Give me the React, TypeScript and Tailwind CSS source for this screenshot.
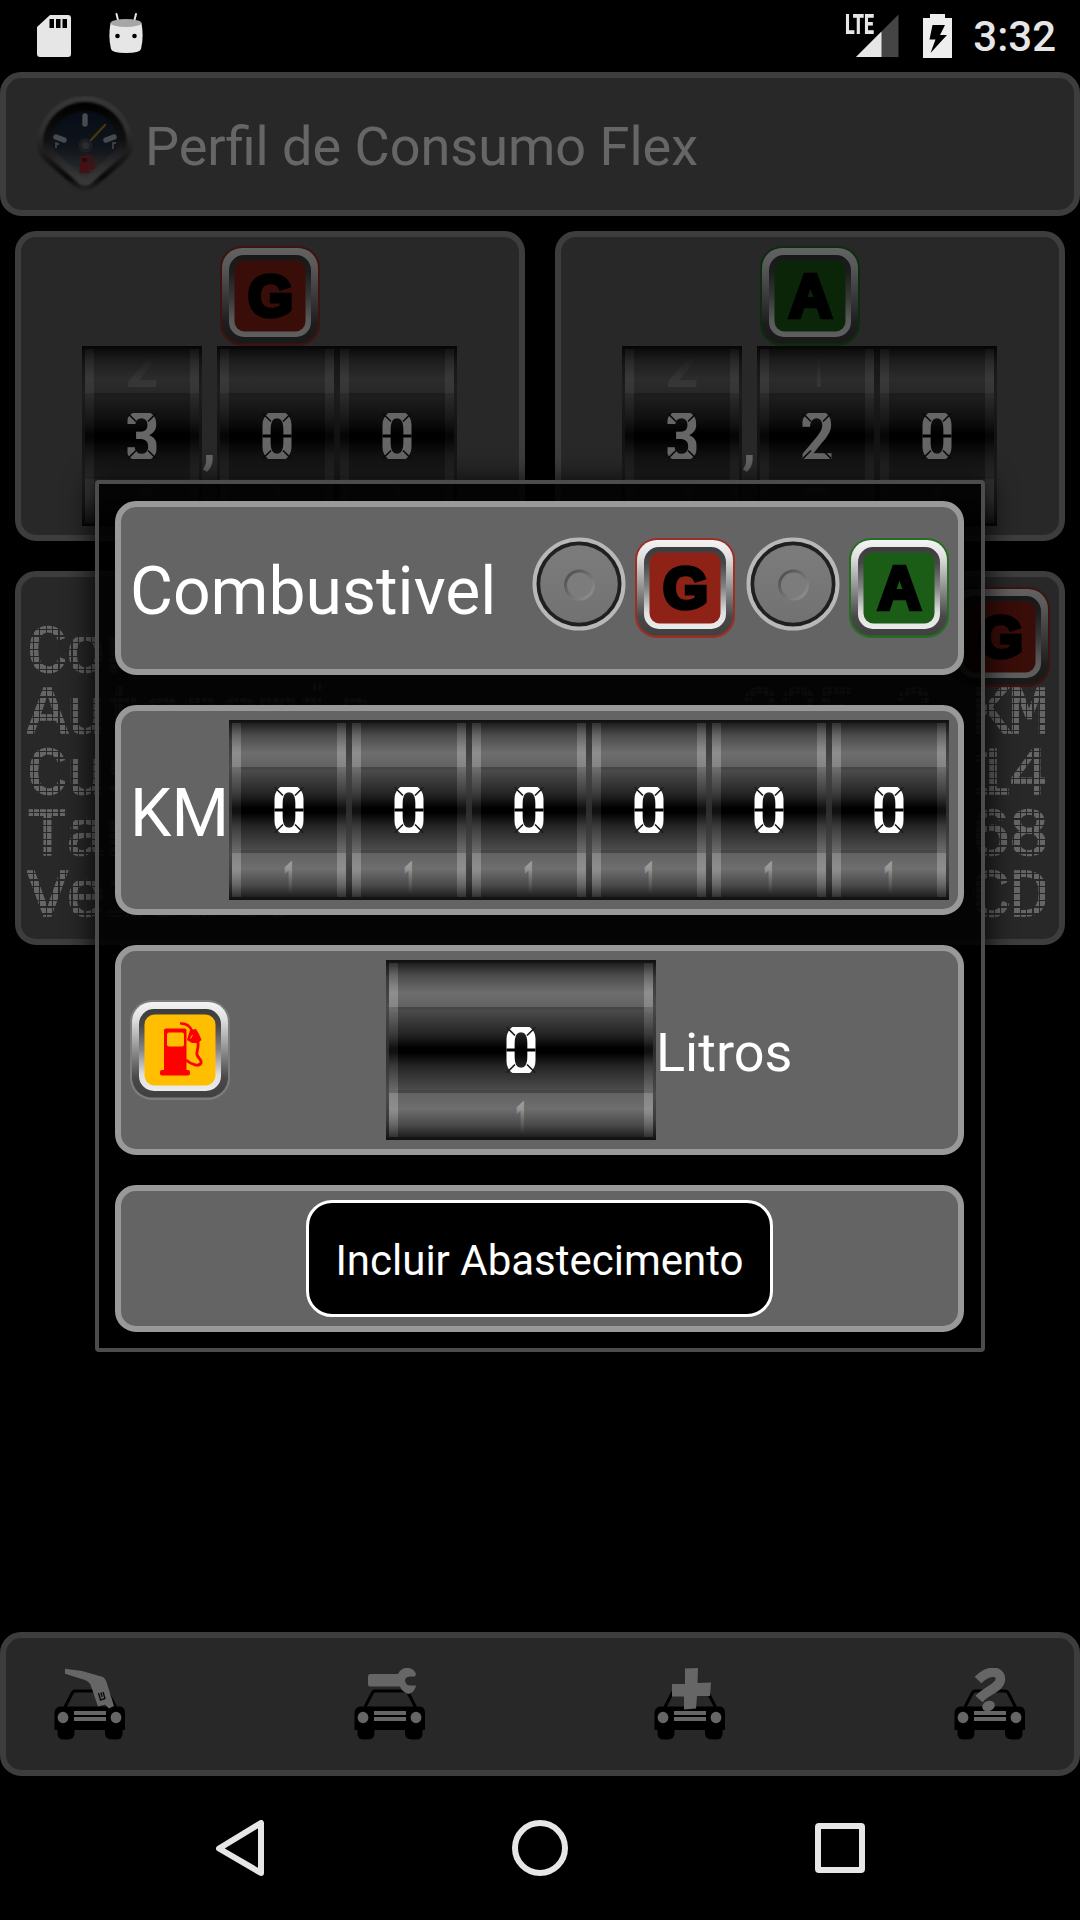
import React from 'react';

type Tone = 'red' | 'green' | 'amber';

const TONES: Record<Tone, { face: string; edge: string }> = {
  red: { face: '#8e2216', edge: '#9c2e24' },
  green: { face: '#1b5d16', edge: '#256e22' },
  amber: { face: '#ffbf00', edge: '#7c7c7c' },
};

function Badge({ tone, children }: { tone: Tone; children: React.ReactNode }) {
  const t = TONES[tone];
  const id = 'badge-' + tone;
  return (
    <svg viewBox="0 0 100 100" className="size-[100px] shrink-0">
      <defs>
        <linearGradient id={id + '-outer'} x1="0" y1="0" x2="0" y2="1">
          <stop offset="0" stopColor="#f4f4f4" />
          <stop offset="0.18" stopColor="#e0e0e0" />
          <stop offset="0.5" stopColor="#909090" />
          <stop offset="0.8" stopColor="#484848" />
          <stop offset="1" stopColor="#404040" />
        </linearGradient>
        <linearGradient id={id + '-inner'} x1="0" y1="0" x2="0" y2="1">
          <stop offset="0" stopColor="#3c3c3c" />
          <stop offset="0.2" stopColor="#484848" />
          <stop offset="0.5" stopColor="#858585" />
          <stop offset="0.8" stopColor="#e0e0e0" />
          <stop offset="1" stopColor="#ececec" />
        </linearGradient>
      </defs>
      <rect x="0" y="0" width="100" height="100" rx="22" fill={t.edge} />
      <g className="blur-[0.7px]">
        <rect x="2" y="2" width="96" height="95.5" rx="20" fill={`url(#${id}-outer)`} />
        <rect x="9" y="9" width="82" height="82" rx="15" fill={`url(#${id}-inner)`} />
        <rect x="14.5" y="14.5" width="71" height="71" rx="10" fill={t.face} />
      </g>
      {children}
    </svg>
  );
}

function FuelBadge({ letter }: { letter: 'G' | 'A' }) {
  return (
    <Badge tone={letter === 'G' ? 'red' : 'green'}>
      <text
        x="50.5"
        y={letter === 'G' ? 69.5 : 71}
        textAnchor="middle"
        fontSize={letter === 'G' ? 58 : 61}
        textLength={letter === 'G' ? 45 : 43}
        lengthAdjust="spacingAndGlyphs"
        className="font-['Liberation_Sans',sans-serif] font-bold"
        fill="#000"
        stroke="#000"
        strokeWidth="4.5"
      >
        {letter}
      </text>
    </Badge>
  );
}

function PumpBadge() {
  return (
    <Badge tone="amber">
      <rect x="34" y="28.5" width="22.5" height="43" rx="2" fill="#f00" />
      <rect x="30" y="70" width="30" height="5.5" rx="2" fill="#f00" />
      <rect x="37" y="32.5" width="17" height="14" rx="2" fill="#ffbf00" />
      <path d="M50 23.5 C56 23 60 26 62 31" fill="none" stroke="#f00" strokeWidth="2.6" />
      <path d="M60 30 L66 29 L69 34 L71.5 40 L68 43 L62 43 L57 40 Z" fill="#f00" />
      <path d="M60.5 38.5 L62.5 35" stroke="#ffbf00" strokeWidth="1" />
      <path
        d="M68 42 C69 48 66 52 67 55 C69 59 72 60 71 63 C69 67 62 65 56 60"
        fill="none"
        stroke="#f00"
        strokeWidth="2.8"
      />
    </Badge>
  );
}

function Wheel({ value, above, below, wide }: { value: string; above?: string; below?: string; wide?: boolean }) {
  return (
    <div
      className={
        'relative h-[180px] shrink-0 bg-[linear-gradient(#101010,#3a3a3a_20px,#4a4a4a_46px,#2c2c2c_90px,#4a4a4a_134px,#3a3a3a_160px,#101010)] p-[3px] ' +
        (wide ? 'w-[270px]' : 'w-[120px]')
      }
    >
      <div className="flex h-full flex-col">
        <div className="h-[44px] bg-[linear-gradient(#1e1e1e,#4a4a4a_12px,#6e6e6e_30px,#626262_44px)]" />
        <div className="h-[3px] bg-[#464646]" />
        <div className="h-[80px] bg-[linear-gradient(#4c4c4c,#242424_24px,#000_38px,#000_43px,#242424_56px,#4c4c4c)]" />
        <div className="h-[3px] bg-[#464646]" />
        <div className="h-[44px] bg-[linear-gradient(#626262,#6e6e6e_16px,#4a4a4a_32px,#1e1e1e)]" />
      </div>
      <div className="absolute inset-y-[3px] left-[3px] w-[9px] bg-[linear-gradient(#ffffff15,#ffffff38_25px,#ffffff38_44px,#ffffff28_50px,#ffffff10_87px,#ffffff28_126px,#ffffff38_132px,#ffffff38_150px,#ffffff15)]" />
      <div className="absolute inset-y-[3px] right-[3px] w-[9px] bg-[linear-gradient(#ffffff15,#ffffff38_25px,#ffffff38_44px,#ffffff28_50px,#ffffff10_87px,#ffffff28_126px,#ffffff38_132px,#ffffff38_150px,#ffffff15)]" />
      <div className="absolute inset-0 flex justify-center">
        <svg viewBox="0 0 40 180" className="h-[180px] w-[40px] font-[Roboto,sans-serif]">
          <defs>
            <clipPath id="digit-window">
              <rect x="5.5" y="67" width="29" height="46" />
            </clipPath>
            <linearGradient id="fade-down" gradientUnits="userSpaceOnUse" x1="0" y1="138" x2="0" y2="174">
              <stop offset="0" stopColor="#fff" stopOpacity="0.42" />
              <stop offset="0.55" stopColor="#fff" stopOpacity="0.15" />
              <stop offset="1" stopColor="#fff" stopOpacity="0" />
            </linearGradient>
            <linearGradient id="fade-up" gradientUnits="userSpaceOnUse" x1="0" y1="12" x2="0" y2="42">
              <stop offset="0" stopColor="#fff" stopOpacity="0" />
              <stop offset="1" stopColor="#fff" stopOpacity="0.24" />
            </linearGradient>
          </defs>
          {above && (
            <text
              x={above === '1' ? 14 : 3.5}
              y="41"
              fontSize="62"
              textLength={above === '1' ? 14 : 33}
              lengthAdjust="spacingAndGlyphs"
              fill="url(#fade-up)"
              className="font-bold"
            >
              {above}
            </text>
          )}
          <g clipPath="url(#digit-window)">
            <text
              x={value === '0' ? 1.5 : 2}
              y="115"
              fontSize="70"
              textLength={value === '0' ? 37 : 36}
              lengthAdjust="spacingAndGlyphs"
              fill="#fff"
              className="font-bold"
            >
              {value}
            </text>
            <path d="M5.500 67 L14 75.500 M34.500 67 L26 75.500 M5.500 113 L14 104.500 M34.500 113 L26 104.500" stroke="#1c1c1c" strokeWidth="1.600" />
            {value === '0' && <path d="M4 90 H14 M26 90 H36" stroke="#000" strokeWidth="3" />}
          </g>
          {below && (
            <text
              x={below === '1' ? 14 : 3.5}
              y="183"
              fontSize="60"
              textLength={below === '1' ? 13 : 33}
              lengthAdjust="spacingAndGlyphs"
              fill="url(#fade-down)"
              className="font-bold"
            >
              {below}
            </text>
          )}
        </svg>
      </div>
    </div>
  );
}

function AverageCard({ fuel, digits }: { fuel: 'G' | 'A'; digits: { v: string; above?: string; below?: string }[] }) {
  return (
    <div className="flex h-[310px] w-[510px] flex-col items-center rounded-[21px] border-[6px] border-[#999] bg-[#646464] pt-[9px]">
      <FuelBadge letter={fuel} />
      <div className="ml-[61px] flex items-start self-start">
        <Wheel value={digits[0].v} above={digits[0].above} below={digits[0].below} />
        <span className="w-[15px] pt-[62px] text-[62px] leading-[66px] font-medium text-white">,</span>
        <Wheel value={digits[1].v} above={digits[1].above} below={digits[1].below} />
        <Wheel value={digits[2].v} below={digits[2].below} />
      </div>
    </div>
  );
}

function MatrixRow({ left, right }: { left: string; right?: string }) {
  return (
    <div className="flex h-[61px] items-start justify-between whitespace-pre">
      <span>{left}</span>
      <span>{right}</span>
    </div>
  );
}

function Gauge() {
  return (
    <svg viewBox="0 0 96 96" className="size-[96px]">
      <defs>
        <linearGradient id="bezel" x1="0" y1="0" x2="0" y2="1">
          <stop offset="0" stopColor="#8c8c8c" />
          <stop offset="0.35" stopColor="#787878" />
          <stop offset="0.6" stopColor="#484848" />
          <stop offset="0.85" stopColor="#151515" />
          <stop offset="1" stopColor="#606060" />
        </linearGradient>
        <linearGradient id="well" x1="0" y1="0" x2="0" y2="1">
          <stop offset="0" stopColor="#000" />
          <stop offset="0.45" stopColor="#2a2a2a" />
          <stop offset="0.75" stopColor="#707070" />
          <stop offset="1" stopColor="#949494" />
        </linearGradient>
        <linearGradient id="dial" x1="0" y1="0" x2="0" y2="1">
          <stop offset="0" stopColor="#12203a" />
          <stop offset="0.55" stopColor="#263444" />
          <stop offset="1" stopColor="#727476" />
        </linearGradient>
      </defs>
      <g className="blur-[0.8px]">
        <path d="M48 0 C75 0 96 23 96 48 C96 56 92 61 87 66 L58 91 C52 97 44 97 38 91 L9 66 C4 61 0 56 0 48 C0 23 21 0 48 0 Z" fill="url(#bezel)" />
        <path d="M48 6 C71 6 90 25 90 47 C90 53 88 57 84 61 L56 86 C51 91 45 91 40 86 L12 61 C8 57 6 53 6 47 C6 25 25 6 48 6 Z" fill="url(#well)" />
        <path d="M48 15 C66 15 81 29 81 46 C81 51 79 54 76 57 L54 77 C50 81 46 81 42 77 L20 57 C17 54 15 51 15 46 C15 29 30 15 48 15 Z" fill="url(#dial)" />
      </g>
      <path d="M48 20 V28 M19 41 L27 44 M77 41 L69 44" stroke="#b4bac4" strokeWidth="5.400" strokeLinecap="round" />
      <path d="M19 52 V46 M19 48 H22 M76 53 V47 H79" stroke="#9aa2ae" strokeWidth="1.800" fill="none" />
      <circle cx="48.500" cy="49.500" r="7" fill="#454c56" />
      <circle cx="48.500" cy="49.500" r="3.500" fill="#68707a" />
      <path d="M54 44 L68 29" stroke="#b5841f" strokeWidth="2.400" strokeLinecap="round" />
      <path d="M43 60 H52 V75 H53 V77 H42 V75 H43 Z" fill="#ac2a30" />
      <path d="M45 62 H50 V66 H45 Z" fill="#3a2c30" />
      <path d="M50 59 L55 62 L57 72 L54 73 L53 66" fill="none" stroke="#ac2a30" strokeWidth="2.200" />
    </svg>
  );
}

function Car({ children }: { children: React.ReactNode }) {
  return (
    <svg viewBox="0 0 72 72" className="size-[72px]">
      <path d="M11 39 L18.500 24.500 Q19.500 23 21 23 H51 Q53 23 54 24.500 L61.500 39" fill="none" stroke="#000" strokeWidth="3" />
      <path d="M6 38.500 H66 Q71 39 71 45 V61 Q72 62 68.500 62 V66 Q68.500 71.500 62 71.500 H58 Q51 71.500 51 65 V62 H20.500 V65 Q20.500 71.500 14 71.500 H10 Q3.500 71.500 3.500 66 V62 H0.500 V45 Q1 39 6 38.500 Z" fill="#000" />
      <g fill="#fff" className="blur-[0.5px]">
        <ellipse cx="9" cy="49.500" rx="5.400" ry="5.800" />
        <ellipse cx="62" cy="49.500" rx="5.400" ry="5.800" />
        <rect x="20" y="43" width="32" height="4" />
        <rect x="20" y="49" width="32" height="4" />
      </g>
      {children}
    </svg>
  );
}

function Radio() {
  return (
    <svg viewBox="0 0 94 94" className="mb-[9px] size-[94px] shrink-0">
      <defs>
        <linearGradient id="knob" x1="0" y1="0" x2="0" y2="1">
          <stop offset="0" stopColor="#7c7c7c" />
          <stop offset="1" stopColor="#727272" />
        </linearGradient>
        <linearGradient id="dent" x1="0" y1="0" x2="1" y2="1">
          <stop offset="0" stopColor="#4a4a4a" />
          <stop offset="1" stopColor="#949494" />
        </linearGradient>
      </defs>
      <g className="blur-[0.7px]">
        <circle cx="47" cy="47" r="44.500" fill="#202020" stroke="#b8b8b8" strokeWidth="4" />
        <circle cx="47" cy="47" r="38.800" fill="url(#knob)" />
        <circle cx="47.500" cy="48" r="14" fill="#7c7c7c" stroke="url(#dent)" strokeWidth="3" />
      </g>
    </svg>
  );
}

const CARD = 'flex rounded-[21px] border-[6px] border-[#999] bg-[#646464]';

export default function App() {
  return (
    <div className="relative flex h-[1920px] w-[1080px] flex-col overflow-hidden bg-black font-[Roboto,sans-serif]">
      <header className="flex h-[72px] items-start justify-between text-[#e6e6e6]">
        <div className="flex pt-[12px] pl-[37px]">
          <svg viewBox="0 0 34 48" className="h-[48px] w-[34px]">
            <path d="M13 3 H31 Q34 3 34 6 V42 Q34 45 31 45 H3 Q0 45 0 42 V15 Z" fill="#e6e6e6" />
            <path d="M12.500 7 H17 V16 H12.500 Z M19 7 H23.500 V16 H19 Z M25.500 7 H30 V16 H25.500 Z" fill="#000" />
          </svg>
          <svg viewBox="0 0 34 48" className="ml-[38px] h-[48px] w-[34px]">
            <path d="M7.500 2 L9.500 10 M27 2 L25 10" stroke="#e6e6e6" strokeWidth="2" strokeLinecap="round" />
            <path d="M1.500 11 Q-1 25 2 37 Q3 41 17 41 Q31 41 32 37 Q35 25 32.500 11 Z" fill="#e6e6e6" />
            <ellipse cx="17" cy="11" rx="15.500" ry="4" fill="#a6a6a6" />
            <circle cx="8.500" cy="24" r="2.300" fill="#000" />
            <circle cx="25.500" cy="24" r="2.300" fill="#000" />
          </svg>
        </div>
        <div className="flex pt-[12px] pr-[24px]">
          <span className="mt-[3px] -mr-[17px] w-[28px] origin-left scale-x-[0.66] text-[27px] leading-[20px] font-black">LTE</span>
          <svg viewBox="0 0 43 48" className="h-[48px] w-[43px]">
            <path d="M0 45 L42.500 2.500 V45 Z" fill="#454545" />
            <path d="M0 45 L25.500 19.500 V45 Z" fill="#e6e6e6" />
          </svg>
          <svg viewBox="0 0 29 48" className="ml-[24px] h-[48px] w-[29px]">
            <path d="M7 2 H22 V6 H29 V46 H0 V6 H7 Z" fill="#eee" />
            <path d="M9.500 13 H22 L17 23 H24 L7.500 41 L12.500 27.500 H6.500 Z" fill="#000" />
          </svg>
          <span className="ml-[21px] text-[42px] leading-[49px] font-medium">3:32</span>
        </div>
      </header>

      <main className="relative flex h-[1704px] flex-col">
        <div className={CARD + ' h-[144px] items-center pl-[31px]'}>
          <Gauge />
          <h1 className="mt-[6px] ml-[12px] text-[54px] leading-[64px] text-white">Perfil de Consumo Flex</h1>
        </div>

        <div className="mt-[15px] flex justify-between px-[15px]">
          <AverageCard fuel="G" digits={[{ v: '3', above: '2', below: '4' }, { v: '0', below: '1' }, { v: '0', below: '1' }]} />
          <AverageCard fuel="A" digits={[{ v: '3', above: '2', below: '4' }, { v: '2', above: '1', below: '3' }, { v: '0', below: '1' }]} />
        </div>

        <div className="relative mx-[15px] mt-[30px] h-[374px] rounded-[21px] border-[6px] border-[#999] bg-[#646464] pt-[46px]">
          <div className="pr-[12px] pl-[6px] font-['Liberation_Mono',monospace] text-[68px] leading-[61px] tracking-[-2.400px] text-white [-webkit-text-stroke:1.600px_#fff] [mask-image:repeating-linear-gradient(90deg,#000_0_5.200px,transparent_5.200px_6.450px),repeating-linear-gradient(#000_0_5.500px,transparent_5.500px_6.780px)] [mask-composite:intersect]">
            <MatrixRow left="Consumo" />
            <MatrixRow left="Autonomia" right="225.2 KM" />
            <MatrixRow left="Custo" right="2.14" />
            <MatrixRow left="Tanque" right="68" />
            <MatrixRow left="Veiculo" right="CD" />
          </div>
          <div className="absolute top-[10px] right-[9px]">
            <FuelBadge letter="G" />
          </div>
        </div>

        <nav className={CARD + ' mt-auto h-[144px] items-center justify-between px-[48px]'}>
          <Car>
            <path d="M11 0.700 L28 3 L49 9 Q51 10 52.500 14 L60 38 L55 40.500 L51 36.500 L44 38.500 L37 18 Q36 14 31 12 L11 5.700 Z" fill="#fff" />
            <path d="M44.500 25 L46.500 32 L51 30.500 L49 24 M47 24.500 L48 29" stroke="#222" strokeWidth="1.400" fill="none" />
          </Car>
          <Car>
            <path d="M16 6 H44 Q47 -1 55 0 Q60 1 62 6 L61 8.500 H56 Q51 9 51 12.500 Q52 18 57 17.500 H62 Q61 24 54.500 26 Q48 24 46 18.500 H16 Q14 18.500 14 16 V8.500 Q14 6 16 6 Z" fill="#fff" />
          </Car>
          <Car>
            <path d="M31 0.500 L44 0 L43.500 15 L57 14.500 L56 28 H43 L42 40.500 L30 41.500 V28.500 H18 V16 H31 Z" fill="#fff" />
          </Car>
          <Car>
            <path d="M24 12 C33 3 46 1 46.500 11 C46 20 33 22 25 31" fill="none" stroke="#fff" strokeWidth="9.500" />
            <ellipse cx="34.500" cy="38" rx="6.500" ry="5" transform="rotate(-20 34.500 38)" fill="#fff" />
          </Car>
        </nav>

        <div className="absolute inset-0 bg-black/60" />

        <section className="absolute top-[408px] left-[95px] flex w-[890px] flex-col gap-[30px] rounded-[4px] border-[4px] border-[#4c4c4c] bg-black/90 px-[16px] pt-[17px] pb-[16px] shadow-[0_4px_26px_6px_#000000b0]">
          <div className={CARD + ' h-[174px] w-[849px] items-center px-[9px]'}>
            <h2 className="pt-[6px] text-[66px] leading-[77px] text-white">Combustivel</h2>
            <div className="ml-auto flex items-center gap-[9px]">
              <Radio />
              <FuelBadge letter="G" />
              <div className="ml-[2px]"><Radio /></div>
              <FuelBadge letter="A" />
            </div>
          </div>

          <div className={CARD + ' h-[210px] w-[849px] items-center justify-between px-[9px]'}>
            <span className="w-[99px] pt-[6px] text-[66px] leading-[77px] text-white">KM</span>
            <div className="flex">
              {[0, 1, 2, 3, 4, 5].map((i) => (
                <Wheel key={i} value="0" below="1" />
              ))}
            </div>
          </div>

          <div className={CARD + ' h-[210px] w-[849px] items-center px-[9px]'}>
            <PumpBadge />
            <div className="ml-[156px]"><Wheel value="0" below="1" wide /></div>
            <span className="pt-[5px] text-[54px] leading-[64px] text-white">Litros</span>
          </div>

          <div className={CARD + ' h-[147px] w-[849px] items-start justify-center pt-[9px]'}>
            <button className="h-[117px] w-[467px] rounded-[26px] border-[3px] border-white bg-black pt-[3px] text-[42px] text-white">
              Incluir Abastecimento
            </button>
          </div>
        </section>
      </main>

      <footer className="flex h-[144px] items-center justify-between pr-[215px] pl-[216px]">
        <svg viewBox="0 0 48 56" className="h-[56px] w-[48px]">
          <path d="M45 3 V53 L3 28.500 Z" fill="none" stroke="#e6e6e6" strokeWidth="6" strokeLinejoin="round" />
        </svg>
        <div className="size-[56px] rounded-full border-[6px] border-[#e6e6e6]" />
        <div className="size-[50px] rounded-[4px] border-[6px] border-[#e6e6e6]" />
      </footer>
    </div>
  );
}
